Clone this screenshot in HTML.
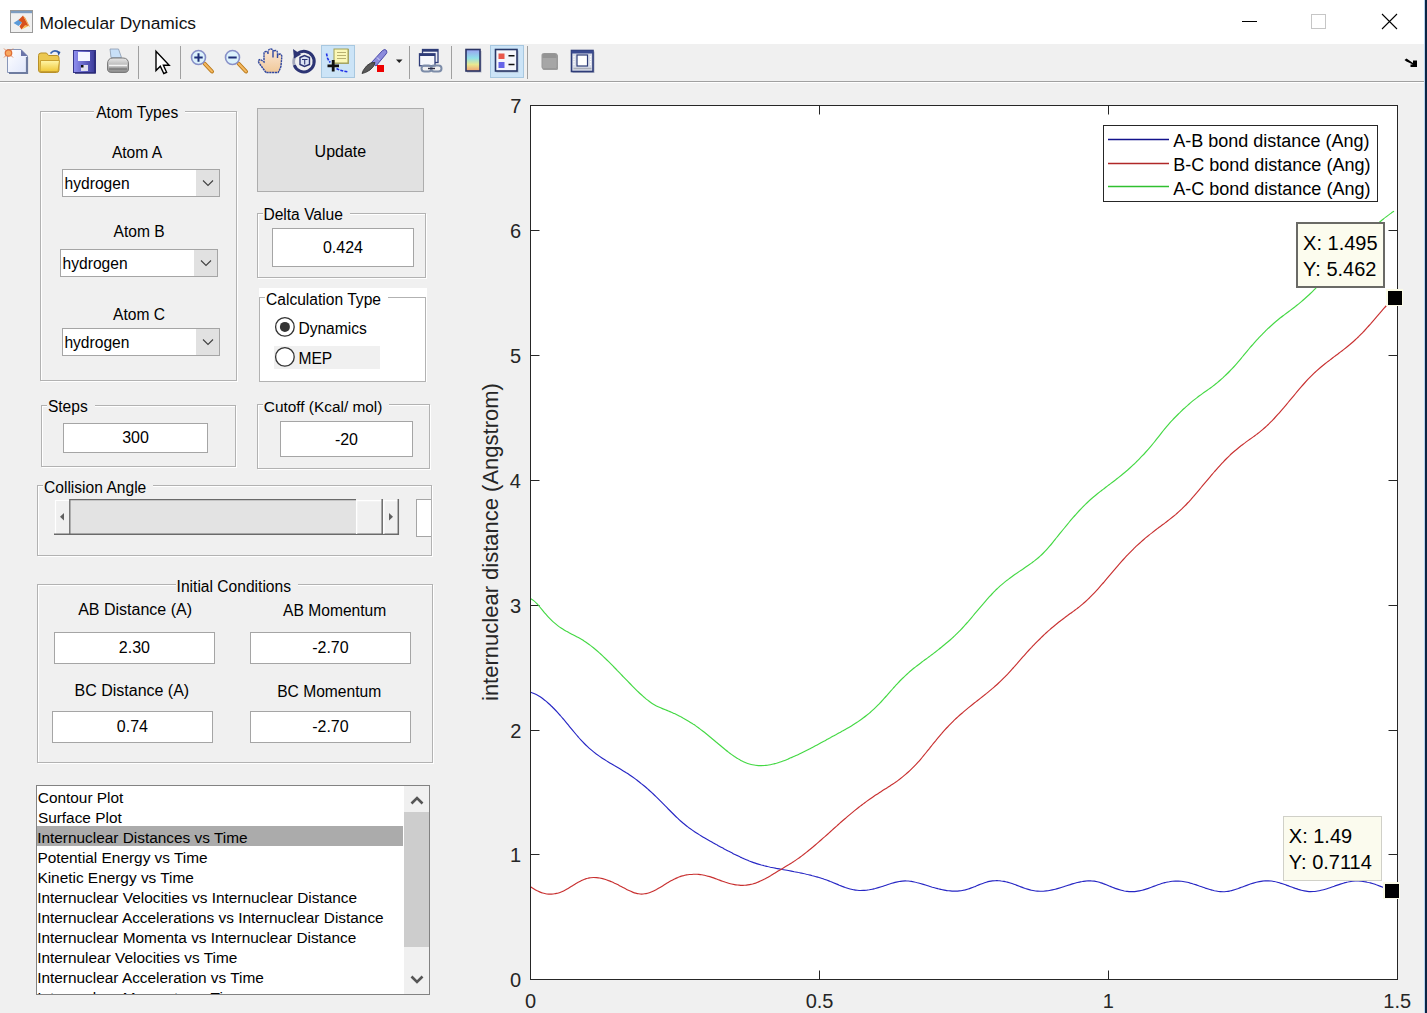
<!DOCTYPE html>
<html><head><meta charset="utf-8">
<style>
*{margin:0;padding:0;box-sizing:border-box}
html,body{width:1427px;height:1013px;overflow:hidden;background:#f0f0f0;font-family:"Liberation Sans",sans-serif;color:#000}
.a{position:absolute}
.t{position:absolute;white-space:nowrap;line-height:1;font-size:16px}
.pnl{position:absolute;border:1px solid #b2b2b2}
.pnlw{position:absolute;border:1px solid #fff}
.ptl{position:absolute;background:#f0f0f0;white-space:nowrap;line-height:1;font-size:16px;padding:0 2px}
.ed{position:absolute;background:#fff;border:1px solid #a5a5a5;font-size:16px;text-align:center;line-height:1}
.dd{position:absolute;background:#fff;border:1px solid #a5a5a5}
.dd .btn{position:absolute;top:0;right:0;bottom:0;width:23px;background:#e1e1e1}
.ax{font-size:20px;color:#262626}
</style></head><body>
<!-- title bar -->
<div class="a" style="left:0;top:0;width:1427px;height:44px;background:#fff"></div>
<svg class="a" style="left:10px;top:10px" width="24" height="24" viewBox="0 0 24 24">
<rect x="0.5" y="0.5" width="22" height="22" fill="#f0f0f0" stroke="#9a9a9a"/>
<rect x="1" y="1" width="21" height="2.2" fill="#7c9cc0"/>
<path d="M3.5 13L9 9.5L12 12.5L8.5 16Z" fill="#5a9ad8"/>
<path d="M8.5 10L13 5.5L16.5 12L18.5 16L15 15.5L11.5 19.5L9.5 16.5L12 12.5Z" fill="#d8501c"/>
<path d="M13 5.5L15.5 8L20 17L18.5 16L16.5 12Z" fill="#f0a040"/>
<path d="M11.5 19.5L15 15.5L18.5 16Z" fill="#f8b848"/>
</svg>
<div class="t" style="left:39.5px;top:14.8px;font-size:17.4px;color:#111">Molecular Dynamics</div>
<div class="a" style="left:1242px;top:21px;width:15px;height:1px;background:#000"></div>
<div class="a" style="left:1311px;top:14px;width:15px;height:15px;border:1px solid #c6c6c6"></div>
<svg class="a" style="left:1381px;top:13px" width="17" height="17"><path d="M1 1L16 16M16 1L1 16" stroke="#000" stroke-width="1.1"/></svg>
<div class="a" style="left:1425px;top:0;width:2px;height:1013px;background:#0b2444"></div>
<div class="a" style="left:1424px;top:0;width:1px;height:1013px;background:#b8d4ee"></div>
<!-- toolbar -->
<div class="a" style="left:0;top:81px;width:1424px;height:1px;background:#a0a0a0"></div>
<div class="a" style="left:0;top:82px;width:1424px;height:1px;background:#fff"></div>
<svg class="a" style="left:0;top:44px" width="620" height="37" viewBox="0 44 620 37">
<defs>
<linearGradient id="doc" x1="0" y1="0" x2="1" y2="1"><stop offset="0" stop-color="#ffffff"/><stop offset="1" stop-color="#dfe6fb"/></linearGradient>
<linearGradient id="fold" x1="0" y1="0" x2="0" y2="1"><stop offset="0" stop-color="#fff6a8"/><stop offset="1" stop-color="#f0c838"/></linearGradient>
<linearGradient id="flop" x1="0" y1="0" x2="1" y2="0"><stop offset="0" stop-color="#9090f0"/><stop offset="1" stop-color="#383898"/></linearGradient>
<linearGradient id="prn" x1="0" y1="0" x2="0" y2="1"><stop offset="0" stop-color="#e8e8e8"/><stop offset="1" stop-color="#8a8a8a"/></linearGradient>
<linearGradient id="skin" x1="0" y1="0" x2="0" y2="1"><stop offset="0" stop-color="#fbe8d8"/><stop offset="1" stop-color="#f0c898"/></linearGradient>
<linearGradient id="cb" x1="0" y1="0" x2="0" y2="1"><stop offset="0" stop-color="#9aa0f0"/><stop offset="0.4" stop-color="#90e0e8"/><stop offset="0.7" stop-color="#e8e890"/><stop offset="1" stop-color="#f0a070"/></linearGradient>
</defs>
<!-- new -->
<path d="M7.5 49.5H21L27.5 56V72.5H7.5Z" fill="url(#doc)" stroke="#8896b8" stroke-width="1"/>
<path d="M27 57V73H9" fill="none" stroke="#6e7ca0" stroke-width="2.2"/>
<path d="M21 49.5V56H27.5Z" fill="#6a74a8"/>
<circle cx="8.5" cy="53" r="3.2" fill="#f8a860" stroke="#e07038" stroke-width="1.3"/>
<path d="M4 48.5l2 2M13 48.5l-2 2M4 57.5l2-2M13 57.5l-2-2" stroke="#e08050" stroke-width="0.9"/>
<!-- open -->
<path d="M38.5 55.5Q38.5 53 41 53H46.5L48.5 55.5H57Q59 55.5 59 58V70Q59 72.5 56.5 72.5H41Q38.5 72.5 38.5 70Z" fill="#ecc850" stroke="#b89028" stroke-width="1"/>
<path d="M40.5 60.5H59.5L58 71.5H40Z" fill="url(#fold)" stroke="#c8a030" stroke-width="1"/>
<path d="M50.5 53.5Q54 49 58 52" stroke="#3a64b0" stroke-width="1.6" fill="none"/>
<path d="M57 50.5L60.5 52L58.5 56Z" fill="#2a54a0"/>
<!-- save -->
<rect x="73.5" y="50.5" width="22" height="22" fill="url(#flop)" stroke="#36368a" stroke-width="1"/>
<path d="M95 51.5V73H75" fill="none" stroke="#2c2c78" stroke-width="1.6"/>
<rect x="78" y="52" width="12" height="9" fill="#f4f6ff"/>
<rect x="81" y="65" width="7" height="6" fill="#e0e0ee"/>
<rect x="81" y="65" width="2.5" height="2.5" fill="#111"/>
<!-- print -->
<path d="M110 49H118.5L121.5 57.5H111Z" fill="#c8e0f8" stroke="#8a9ab0" stroke-width="0.8"/>
<path d="M107.5 64Q107.5 58 113 58H123Q128.5 58 128.5 64V69Q128.5 72.5 124 72.5H112Q107.5 72.5 107.5 69Z" fill="url(#prn)" stroke="#7a7a7a" stroke-width="1"/>
<path d="M109 65.5H127" stroke="#f4f4f4" stroke-width="1.5"/>
<path d="M109 69H127" stroke="#6a6a6a" stroke-width="1"/>
<rect x="138" y="46" width="1" height="33" fill="#a0a0a0"/>
<!-- pointer -->
<path d="M156 51.2V70.5L160.3 66.3L163.8 73.5L166.6 72.3L163.4 65.3H169.2Z" fill="#fff" stroke="#000" stroke-width="1.4" stroke-linejoin="miter"/>
<rect x="180" y="46" width="1" height="33" fill="#a0a0a0"/>
<!-- zoom in -->
<path d="M204.5 63.5l7.5 8" stroke="#b87818" stroke-width="4" stroke-linecap="round"/>
<path d="M204.5 63.5l7.5 8" stroke="#f4b860" stroke-width="2" stroke-linecap="round"/>
<circle cx="198.5" cy="57.5" r="7" fill="#dcf2fc" stroke="#8890c8" stroke-width="1.6"/>
<path d="M194.3 57.5h8.4M198.5 53.3v8.4" stroke="#1e2e78" stroke-width="2"/>
<!-- zoom out -->
<path d="M238.5 63.5l7.5 8" stroke="#b87818" stroke-width="4" stroke-linecap="round"/>
<path d="M238.5 63.5l7.5 8" stroke="#f4b860" stroke-width="2" stroke-linecap="round"/>
<circle cx="232.5" cy="57.5" r="7" fill="#dcf2fc" stroke="#8890c8" stroke-width="1.6"/>
<path d="M228.3 57.5h8.4" stroke="#1e2e78" stroke-width="2"/>
<!-- pan hand -->
<path d="M266 72.5L259 63Q257.5 60 260.5 59.5L264 62V54Q264 51.5 266 51.5Q268 51.5 268 54V51.5Q268.5 49 270.8 49Q273 49 273 51.5V57.5V52Q273.5 50.5 275.5 50.5Q277.5 50.5 277.5 53V58V56Q278 54 280 54Q282 54.5 281.8 57L281 66Q280 70 278 72.5Z" fill="url(#skin)" stroke="#3048a0" stroke-width="1.4" stroke-dasharray="2.2 0.6"/>
<!-- rotate -->
<path d="M297.5 53.5A10.3 10.3 0 1 1 294.2 65" fill="none" stroke="#2c3474" stroke-width="3"/>
<path d="M294.2 65A10.3 10.3 0 0 1 295.5 56" fill="none" stroke="#a4a8bc" stroke-width="2.8"/>
<path d="M293 49L301 54.5L294 58.5Z" fill="#2c3474"/>
<path d="M300 57.5L304.5 55.5L309.5 57.5V64.5L304.5 66.5L300 64.5Z" fill="#dce4f4" stroke="#2c3474" stroke-width="1.4"/>
<path d="M302 59.5H307.5M304.7 59.5V64.5" stroke="#2c3474" stroke-width="1.1"/>
<!-- datacursor selected -->
<rect x="321.5" y="45.5" width="33" height="32" fill="#cce4f7" stroke="#a8c8e0"/>
<rect x="334" y="49" width="15" height="15" fill="#a8a870"/>
<rect x="334" y="49" width="14" height="14" fill="#fbf8b8" stroke="#a0a058" stroke-width="1"/>
<path d="M337 52.5h9M337 55.5h9M337 58.5h9" stroke="#b8b070" stroke-width="1"/>
<path d="M326.5 53.5l1 4.5l1.2 2.5l1.6 2" stroke="#2030e8" stroke-width="1.6" stroke-dasharray="3 1.2" fill="none"/>
<path d="M336.5 68.5l3 1.5l4 1l4 .8" stroke="#2030e8" stroke-width="1.6" stroke-dasharray="3 1.2" fill="none"/>
<path d="M327.5 65.8h11.5M333.2 60v11.5" stroke="#101010" stroke-width="2.8"/>
<!-- brush -->
<path d="M371.5 62.5L382.5 50.5Q385 48.5 386.5 50.5Q387.5 52.5 386 54L376 66Z" fill="#8c8cdc" stroke="#4a4aa8" stroke-width="1"/>
<path d="M377 57.5l2.5 2.5" stroke="#f0f0ff" stroke-width="0.8"/>
<path d="M375 62.5Q371 61.5 366.5 66Q362.5 70.5 362 73.5Q365.5 73 370 70Q374.5 66.5 375 62.5Z" fill="#585858" stroke="#303030" stroke-width="0.8"/>
<rect x="377" y="65" width="7" height="7" fill="#ee0000"/>
<path d="M396 59.5h6.5l-3.25 3.5z" fill="#222"/>
<rect x="409" y="46" width="1" height="33" fill="#a0a0a0"/>
<!-- link -->
<rect x="422.5" y="49.5" width="15.5" height="13" fill="#eef0f8" stroke="#2e3c78" stroke-width="1.3"/>
<rect x="422.5" y="49.5" width="15.5" height="2.2" fill="#2e3c78"/>
<rect x="419.5" y="53.8" width="15.5" height="12" fill="#f6f8fc" stroke="#2e3c78" stroke-width="1.3"/>
<rect x="419.5" y="53.8" width="15.5" height="2.2" fill="#2e3c78"/>
<rect x="421.5" y="65.5" width="10" height="6" rx="3" fill="none" stroke="#7c8ca8" stroke-width="2"/>
<rect x="431" y="65.5" width="10.5" height="6" rx="3" fill="none" stroke="#7c8ca8" stroke-width="2"/>
<path d="M428 68.5h7" stroke="#2a2a40" stroke-width="1.4"/>
<rect x="451" y="46" width="1" height="33" fill="#a0a0a0"/>
<!-- colorbar -->
<rect x="467" y="51" width="14.5" height="21.5" fill="#8890a8" opacity="0.6"/>
<rect x="466" y="49.5" width="14" height="21.5" fill="url(#cb)" stroke="#2a3464" stroke-width="1.6"/>
<!-- legend selected -->
<rect x="490.5" y="45.5" width="33" height="32" fill="#cce4f7" stroke="#a8c8e0"/>
<rect x="496.5" y="50.5" width="22" height="22" fill="#8890a8" opacity="0.6"/>
<rect x="495.5" y="49.5" width="21.5" height="21.5" fill="#f4f6fb" stroke="#283868" stroke-width="1.6"/>
<rect x="498.5" y="53.5" width="6" height="5.5" fill="#e8584c"/>
<rect x="498.5" y="62" width="6" height="6" fill="#6464e8"/>
<path d="M508.5 55.8h6M508.5 64.5h6" stroke="#111" stroke-width="1.6"/>
<rect x="527" y="46" width="1" height="33" fill="#a0a0a0"/>
<!-- gray square -->
<rect x="542.5" y="54.5" width="15.5" height="15.5" rx="1.5" fill="#9c9c9c"/>
<rect x="542" y="53.5" width="15" height="15" rx="1.5" fill="#a6a6a6" stroke="#989898" stroke-width="1"/>
<rect x="542.5" y="54" width="14" height="4" fill="#949494"/>
<!-- window -->
<rect x="572.5" y="51.5" width="22" height="21.5" fill="#8890a8" opacity="0.6"/>
<rect x="571.5" y="50.5" width="21.5" height="21" fill="#d8dce8" stroke="#2e3c78" stroke-width="1.6"/>
<rect x="571.5" y="50.5" width="21.5" height="3" fill="#3a4a90"/>
<rect x="577" y="55" width="10.5" height="11" fill="#fff" stroke="#2e3c78" stroke-width="1.2"/>
<path d="M574 56v9M590.5 56v9" stroke="#ffffff" stroke-width="1.2" stroke-dasharray="1.5 1"/>
<path d="M573.5 68.5h18" stroke="#a8acb8" stroke-width="1.5"/>
</svg>
<svg class="a" style="left:1403px;top:56px" width="17" height="13" viewBox="0 0 17 13"><path d="M1.5 4L3.5 2.5L10 7V4.5H14V11H7.5V8.5H10L3.5 5.5Z" fill="#000"/></svg>
<div class="pnlw" style="left:41px;top:112px;width:197px;height:270px"></div><div class="pnl" style="left:40px;top:111px;width:197px;height:270px"></div>
<div class="a" style="left:94.3px;top:103.8px;width:91.0px;height:18.0px;background:#f0f0f0"></div><div class="t" style="left:96.2px;top:104.6px;font-size:15.6px">Atom Types</div>
<div class="t" style="left:111.9px;top:144.7px;font-size:15.6px;">Atom A</div>
<div class="dd" style="left:62px;top:169px;width:158px;height:28px"><div class="btn"></div></div><svg class="a" style="left:201.5px;top:179.0px" width="12" height="8"><path d="M1 1.5L6 6.5L11 1.5" fill="none" stroke="#404040" stroke-width="1.1"/></svg><div class="t" style="left:64.6px;top:176.3px;font-size:15.6px;">hydrogen</div>
<div class="t" style="left:113.5px;top:224.0px;font-size:15.6px;">Atom B</div>
<div class="dd" style="left:60px;top:249px;width:158px;height:28px"><div class="btn"></div></div><svg class="a" style="left:199.5px;top:259.0px" width="12" height="8"><path d="M1 1.5L6 6.5L11 1.5" fill="none" stroke="#404040" stroke-width="1.1"/></svg><div class="t" style="left:62.6px;top:255.6px;font-size:15.6px;">hydrogen</div>
<div class="t" style="left:113.0px;top:307.2px;font-size:15.6px;">Atom C</div>
<div class="dd" style="left:62px;top:328px;width:158px;height:28px"><div class="btn"></div></div><svg class="a" style="left:201.5px;top:338.0px" width="12" height="8"><path d="M1 1.5L6 6.5L11 1.5" fill="none" stroke="#404040" stroke-width="1.1"/></svg><div class="t" style="left:64.4px;top:334.7px;font-size:15.6px;">hydrogen</div>
<div class="a" style="left:257px;top:108px;width:167px;height:84px;background:#e1e1e1;border:1px solid #adadad"></div>
<div class="t" style="left:314.6px;top:143.5px;font-size:16px;">Update</div>
<div class="pnlw" style="left:258px;top:214px;width:169px;height:65px"></div><div class="pnl" style="left:257px;top:213px;width:169px;height:65px"></div>
<div class="a" style="left:262.6px;top:205.7px;width:87.0px;height:18.0px;background:#f0f0f0"></div><div class="t" style="left:263.4px;top:206.5px;font-size:15.6px">Delta Value</div>
<div class="ed" style="left:272px;top:228px;width:142px;height:39px"></div><div class="t" style="left:322.9px;top:240.2px;font-size:16px;">0.424</div>
<div class="a" style="left:259px;top:288px;width:168px;height:94px;background:#fff"></div>
<div class="a" style="left:259px;top:297px;width:167px;height:85px;border:1px solid #b2b2b2"></div>
<div class="a" style="left:264.8px;top:290.8px;width:123.0px;height:18.0px;background:#fff"></div><div class="t" style="left:266.0px;top:291.6px;font-size:15.6px">Calculation Type</div>
<div class="a" style="left:274px;top:346px;width:106px;height:23px;background:#f0f0f0"></div>
<svg class="a" style="left:274px;top:316px" width="22" height="52"><circle cx="10.9" cy="10.9" r="9.3" fill="#fff" stroke="#333" stroke-width="1.3"/><circle cx="10.9" cy="10.9" r="5" fill="#333"/><circle cx="10.9" cy="40.9" r="9.3" fill="#fff" stroke="#333" stroke-width="1.3"/></svg>
<div class="t" style="left:298.4px;top:320.5px;font-size:15.6px;">Dynamics</div>
<div class="t" style="left:298.4px;top:350.6px;font-size:15.6px;">MEP</div>
<div class="pnlw" style="left:42px;top:406px;width:195px;height:62px"></div><div class="pnl" style="left:41px;top:405px;width:195px;height:62px"></div>
<div class="a" style="left:46.6px;top:398.6px;width:48.1px;height:18.0px;background:#f0f0f0"></div><div class="t" style="left:47.9px;top:399.4px;font-size:15.6px">Steps</div>
<div class="ed" style="left:63px;top:423px;width:145px;height:30px"></div><div class="t" style="left:122.2px;top:430.2px;font-size:16px;">300</div>
<div class="pnlw" style="left:258px;top:405px;width:173px;height:65px"></div><div class="pnl" style="left:257px;top:404px;width:173px;height:65px"></div>
<div class="a" style="left:262.6px;top:397.9px;width:126.5px;height:18.0px;background:#f0f0f0"></div><div class="t" style="left:263.8px;top:398.9px;font-size:15.4px">Cutoff (Kcal/ mol)</div>
<div class="ed" style="left:280px;top:421px;width:133px;height:36px"></div><div class="t" style="left:334.9px;top:431.6px;font-size:16px;">-20</div>
<div class="pnlw" style="left:38px;top:486px;width:395px;height:71px"></div><div class="pnl" style="left:37px;top:485px;width:395px;height:71px"></div>
<div class="a" style="left:42.8px;top:478.9px;width:110.4px;height:18.0px;background:#f0f0f0"></div><div class="t" style="left:44.0px;top:479.7px;font-size:15.6px">Collision Angle</div>
<div class="a" style="left:416px;top:499px;width:15px;height:38px;background:#fff;border:1px solid #a5a5a5;border-right:none"></div>
<svg class="a" style="left:50px;top:495px" width="352" height="45" viewBox="50 495 352 45">
<rect x="54" y="500" width="16" height="35" fill="#f0f0f0"/>
<path d="M55.5 534V500.5H69" stroke="#fff" stroke-width="1.2" fill="none"/>
<rect x="69" y="499" width="287" height="36" fill="#e3e3e3"/>
<path d="M69.8 535V499.6H356" stroke="#6a6a6a" stroke-width="1.3" fill="none"/>
<path d="M54 534.3H399" stroke="#6a6a6a" stroke-width="1.5"/>
<path d="M356.6 534V500.6H382" stroke="#fff" stroke-width="1.3" fill="none"/>
<path d="M382.2 499V535" stroke="#6a6a6a" stroke-width="1.5"/>
<path d="M383.8 534V500.6H398" stroke="#fff" stroke-width="1.3" fill="none"/>
<path d="M398.3 499V535" stroke="#6a6a6a" stroke-width="1.5"/>
<path d="M64 513V520.5L60 516.7Z" fill="#606060"/>
<path d="M389 513V520.5L393 516.7Z" fill="#606060"/>
</svg>
<div class="pnlw" style="left:38px;top:585px;width:396px;height:179px"></div><div class="pnl" style="left:37px;top:584px;width:396px;height:179px"></div>
<div class="a" style="left:176.0px;top:577.7px;width:122.0px;height:18.0px;background:#f0f0f0"></div><div class="t" style="left:176.6px;top:578.5px;font-size:15.6px">Initial Conditions</div>
<div class="t" style="left:78.2px;top:602.3px;font-size:16px;">AB Distance (A)</div>
<div class="t" style="left:283.1px;top:603.0px;font-size:15.6px;">AB Momentum</div>
<div class="t" style="left:74.5px;top:683.4px;font-size:16px;">BC Distance (A)</div>
<div class="t" style="left:277.2px;top:683.9px;font-size:15.6px;">BC Momentum</div>
<div class="ed" style="left:54px;top:632px;width:161px;height:32px"></div><div class="t" style="left:118.8px;top:640.4px;font-size:16px;">2.30</div>
<div class="ed" style="left:250px;top:632px;width:161px;height:32px"></div><div class="t" style="left:312.2px;top:639.9px;font-size:16px;">-2.70</div>
<div class="ed" style="left:52px;top:711px;width:161px;height:32px"></div><div class="t" style="left:116.8px;top:719.4px;font-size:16px;">0.74</div>
<div class="ed" style="left:250px;top:711px;width:161px;height:32px"></div><div class="t" style="left:312.2px;top:719.1px;font-size:16px;">-2.70</div>
<div class="a" style="left:36px;top:785px;width:394px;height:210px;background:#fff;border:1px solid #828282;overflow:hidden">
<div class="a" style="left:0;top:40px;width:366px;height:20px;background:#ababab"></div>
<div class="t" style="left:0.8px;top:3.6px;font-size:15.4px">Contour Plot</div>
<div class="t" style="left:0.9px;top:23.6px;font-size:15.4px">Surface Plot</div>
<div class="t" style="left:0.2px;top:43.6px;font-size:15.4px">Internuclear Distances vs Time</div>
<div class="t" style="left:0.4px;top:63.6px;font-size:15.4px">Potential Energy vs Time</div>
<div class="t" style="left:0.4px;top:83.6px;font-size:15.4px">Kinetic Energy vs Time</div>
<div class="t" style="left:0.2px;top:103.6px;font-size:15.4px">Internuclear Velocities vs Internuclear Distance</div>
<div class="t" style="left:0.2px;top:123.6px;font-size:15.4px">Internuclear Accelerations vs Internuclear Distance</div>
<div class="t" style="left:0.2px;top:143.6px;font-size:15.4px">Internuclear Momenta vs Internuclear Distance</div>
<div class="t" style="left:0.2px;top:163.6px;font-size:15.4px">Internulear Velocities vs Time</div>
<div class="t" style="left:0.2px;top:183.6px;font-size:15.4px">Internuclear Acceleration vs Time</div>
<div class="t" style="left:0.2px;top:203.6px;font-size:15.4px">Internuclear Momenta vs Time</div>
<div class="a" style="left:367px;top:0;width:25px;height:208px;background:#f0f0f0"></div>
<div class="a" style="left:367px;top:26px;width:25px;height:135px;background:#cdcdcd"></div>
<svg class="a" style="left:372.5px;top:7.5px" width="14" height="12"><path d="M1.5 9.5L7 4L12.5 9.5" fill="none" stroke="#555" stroke-width="2.6"/></svg>
<svg class="a" style="left:373px;top:188px" width="14" height="12"><path d="M1.5 2.5L7 8L12.5 2.5" fill="none" stroke="#555" stroke-width="2.6"/></svg>
</div>
<div class="a" style="left:530px;top:105px;width:868px;height:875px;background:#fff"></div>
<svg class="a" style="left:0;top:0" width="1427" height="1013" viewBox="0 0 1427 1013">
<path d="M530.5 979.5v-9M530.5 105.5v9M819.5 979.5v-9M819.5 105.5v9M1108.5 979.5v-9M1108.5 105.5v9M1397.5 979.5v-9M1397.5 105.5v9M530.5 979.5h9M1397.5 979.5h-9M530.5 854.5h9M1397.5 854.5h-9M530.5 730.5h9M1397.5 730.5h-9M530.5 605.5h9M1397.5 605.5h-9M530.5 480.5h9M1397.5 480.5h-9M530.5 355.5h9M1397.5 355.5h-9M530.5 230.5h9M1397.5 230.5h-9M530.5 105.5h9M1397.5 105.5h-9" stroke="#262626" stroke-width="1" fill="none"/>
<path d="M530.3 692.1C530.8 692.3 532.3 692.8 533.3 693.2C534.3 693.6 535.3 694.1 536.3 694.6C537.3 695.1 538.3 695.7 539.3 696.3C540.3 696.9 541.3 697.6 542.3 698.3C543.3 699.1 544.3 699.8 545.3 700.6C546.3 701.4 547.3 702.3 548.3 703.2C549.3 704.1 550.3 705.0 551.3 706.0C552.3 706.9 553.3 708.0 554.3 709.0C555.3 710.0 556.3 711.1 557.3 712.2C558.3 713.3 559.3 714.4 560.3 715.5C561.3 716.7 562.3 717.9 563.3 719.0C564.3 720.2 565.3 721.4 566.3 722.6C567.3 723.8 568.3 725.1 569.3 726.3C570.3 727.5 571.3 728.7 572.3 729.9C573.3 731.1 574.3 732.3 575.3 733.5C576.3 734.7 577.3 735.9 578.3 737.0C579.3 738.2 580.3 739.3 581.3 740.4C582.3 741.5 583.3 742.5 584.3 743.5C585.3 744.5 586.3 745.5 587.3 746.4C588.3 747.4 589.3 748.3 590.3 749.1C591.3 750.0 592.3 750.8 593.3 751.6C594.3 752.4 595.3 753.2 596.3 754.0C597.3 754.7 598.3 755.4 599.3 756.1C600.3 756.8 601.3 757.5 602.3 758.2C603.3 758.9 604.3 759.5 605.3 760.1C606.3 760.8 607.3 761.4 608.3 762.0C609.3 762.6 610.3 763.2 611.3 763.8C612.3 764.4 613.3 765.0 614.3 765.6C615.3 766.1 616.3 766.7 617.3 767.3C618.3 767.9 619.3 768.5 620.3 769.1C621.3 769.7 622.3 770.3 623.3 770.9C624.3 771.5 625.3 772.1 626.3 772.8C627.3 773.4 628.3 774.0 629.3 774.7C630.3 775.4 631.3 776.1 632.3 776.8C633.3 777.5 634.3 778.2 635.3 778.9C636.3 779.7 637.3 780.4 638.3 781.2C639.3 782.0 640.3 782.7 641.3 783.6C642.3 784.4 643.3 785.2 644.3 786.0C645.3 786.9 646.3 787.7 647.3 788.6C648.3 789.5 649.3 790.3 650.3 791.3C651.3 792.2 652.3 793.1 653.3 794.0C654.3 794.9 655.3 795.9 656.3 796.9C657.3 797.8 658.3 798.8 659.3 799.8C660.3 800.8 661.3 801.8 662.3 802.8C663.3 803.8 664.3 804.8 665.3 805.9C666.3 806.9 667.3 807.9 668.3 809.0C669.3 810.0 670.3 811.0 671.3 812.0C672.3 813.0 673.3 814.0 674.3 815.0C675.3 816.0 676.3 817.0 677.3 817.9C678.3 818.8 679.3 819.8 680.3 820.7C681.3 821.6 682.3 822.4 683.3 823.3C684.3 824.1 685.3 824.9 686.3 825.7C687.3 826.5 688.3 827.2 689.3 828.0C690.3 828.7 691.3 829.4 692.3 830.1C693.3 830.8 694.3 831.5 695.3 832.2C696.3 832.9 697.3 833.5 698.3 834.1C699.3 834.8 700.3 835.4 701.3 836.0C702.3 836.6 703.3 837.2 704.3 837.8C705.3 838.4 706.3 839.0 707.3 839.5C708.3 840.1 709.3 840.7 710.3 841.2C711.3 841.8 712.3 842.3 713.3 842.9C714.3 843.5 715.3 844.0 716.3 844.6C717.3 845.1 718.3 845.7 719.3 846.2C720.3 846.8 721.3 847.3 722.3 847.8C723.3 848.4 724.3 848.9 725.3 849.5C726.3 850.0 727.3 850.5 728.3 851.1C729.3 851.6 730.3 852.1 731.3 852.6C732.3 853.1 733.3 853.7 734.3 854.2C735.3 854.7 736.3 855.2 737.3 855.6C738.3 856.1 739.3 856.6 740.3 857.1C741.3 857.5 742.3 858.0 743.3 858.4C744.3 858.9 745.3 859.3 746.3 859.7C747.3 860.1 748.3 860.6 749.3 861.0C750.3 861.3 751.3 861.7 752.3 862.1C753.3 862.5 754.3 862.8 755.3 863.1C756.3 863.5 757.3 863.8 758.3 864.1C759.3 864.4 760.3 864.7 761.3 865.0C762.3 865.2 763.3 865.5 764.3 865.8C765.3 866.0 766.3 866.3 767.3 866.5C768.3 866.7 769.3 866.9 770.3 867.2C771.3 867.4 772.3 867.6 773.3 867.8C774.3 868.0 775.3 868.2 776.3 868.4C777.3 868.5 778.3 868.7 779.3 868.9C780.3 869.1 781.3 869.3 782.3 869.5C783.3 869.6 784.3 869.8 785.3 870.0C786.3 870.2 787.3 870.4 788.3 870.5C789.3 870.7 790.3 870.9 791.3 871.1C792.3 871.3 793.3 871.5 794.3 871.7C795.3 871.8 796.3 872.0 797.3 872.2C798.3 872.4 799.3 872.6 800.3 872.9C801.3 873.1 802.3 873.3 803.3 873.5C804.3 873.7 805.3 873.9 806.3 874.2C807.3 874.4 808.3 874.6 809.3 874.9C810.3 875.1 811.3 875.4 812.3 875.7C813.3 875.9 814.3 876.2 815.3 876.5C816.3 876.8 817.3 877.0 818.3 877.3C819.3 877.6 820.3 878.0 821.3 878.3C822.3 878.6 823.3 878.9 824.3 879.3C825.3 879.6 826.3 880.0 827.3 880.3C828.3 880.7 829.3 881.1 830.3 881.5C831.3 881.8 832.3 882.3 833.3 882.7C834.3 883.1 835.3 883.5 836.3 883.9C837.3 884.3 838.3 884.7 839.3 885.2C840.3 885.6 841.3 886.0 842.3 886.4C843.3 886.7 844.3 887.1 845.3 887.5C846.3 887.8 847.3 888.2 848.3 888.5C849.3 888.8 850.3 889.1 851.3 889.3C852.3 889.5 853.3 889.8 854.3 889.9C855.3 890.1 856.3 890.2 857.3 890.3C858.3 890.4 859.3 890.5 860.3 890.5C861.3 890.5 862.3 890.5 863.3 890.4C864.3 890.4 865.3 890.3 866.3 890.2C867.3 890.1 868.3 889.9 869.3 889.8C870.3 889.6 871.3 889.4 872.3 889.2C873.3 889.0 874.3 888.7 875.3 888.5C876.3 888.2 877.3 887.9 878.3 887.6C879.3 887.3 880.3 887.0 881.3 886.7C882.3 886.4 883.3 886.1 884.3 885.7C885.3 885.4 886.3 885.1 887.3 884.7C888.3 884.4 889.3 884.1 890.3 883.8C891.3 883.4 892.3 883.1 893.3 882.9C894.3 882.6 895.3 882.3 896.3 882.1C897.3 881.9 898.3 881.7 899.3 881.5C900.3 881.3 901.3 881.2 902.3 881.1C903.3 881.0 904.3 880.9 905.3 880.9C906.3 880.9 907.3 881.0 908.3 881.0C909.3 881.1 910.3 881.2 911.3 881.4C912.3 881.6 913.3 881.8 914.3 882.0C915.3 882.2 916.3 882.4 917.3 882.7C918.3 882.9 919.3 883.2 920.3 883.5C921.3 883.8 922.3 884.1 923.3 884.4C924.3 884.7 925.3 885.0 926.3 885.3C927.3 885.6 928.3 886.0 929.3 886.3C930.3 886.6 931.3 886.9 932.3 887.2C933.3 887.4 934.3 887.7 935.3 888.0C936.3 888.3 937.3 888.5 938.3 888.8C939.3 889.0 940.3 889.3 941.3 889.5C942.3 889.7 943.3 889.9 944.3 890.1C945.3 890.3 946.3 890.4 947.3 890.6C948.3 890.7 949.3 890.8 950.3 890.9C951.3 891.0 952.3 891.1 953.3 891.1C954.3 891.1 955.3 891.2 956.3 891.1C957.3 891.1 958.3 891.0 959.3 890.9C960.3 890.8 961.3 890.7 962.3 890.5C963.3 890.3 964.3 890.1 965.3 889.9C966.3 889.6 967.3 889.3 968.3 889.0C969.3 888.7 970.3 888.3 971.3 887.9C972.3 887.6 973.3 887.2 974.3 886.8C975.3 886.4 976.3 885.9 977.3 885.5C978.3 885.1 979.3 884.7 980.3 884.3C981.3 883.9 982.3 883.5 983.3 883.2C984.3 882.8 985.3 882.5 986.3 882.2C987.3 881.9 988.3 881.6 989.3 881.4C990.3 881.2 991.3 881.0 992.3 880.9C993.3 880.8 994.3 880.7 995.3 880.7C996.3 880.6 997.3 880.7 998.3 880.7C999.3 880.8 1000.3 880.8 1001.3 881.0C1002.3 881.1 1003.3 881.3 1004.3 881.4C1005.3 881.6 1006.3 881.9 1007.3 882.1C1008.3 882.4 1009.3 882.7 1010.3 883.0C1011.3 883.3 1012.3 883.6 1013.3 884.0C1014.3 884.4 1015.3 884.7 1016.3 885.1C1017.3 885.5 1018.3 885.9 1019.3 886.3C1020.3 886.7 1021.3 887.0 1022.3 887.4C1023.3 887.8 1024.3 888.1 1025.3 888.5C1026.3 888.8 1027.3 889.1 1028.3 889.4C1029.3 889.7 1030.3 890.0 1031.3 890.2C1032.3 890.4 1033.3 890.6 1034.3 890.7C1035.3 890.9 1036.3 891.0 1037.3 891.1C1038.3 891.2 1039.3 891.2 1040.3 891.2C1041.3 891.2 1042.3 891.2 1043.3 891.2C1044.3 891.1 1045.3 891.0 1046.3 890.9C1047.3 890.8 1048.3 890.7 1049.3 890.5C1050.3 890.3 1051.3 890.1 1052.3 889.9C1053.3 889.7 1054.3 889.5 1055.3 889.2C1056.3 889.0 1057.3 888.7 1058.3 888.4C1059.3 888.1 1060.3 887.8 1061.3 887.5C1062.3 887.2 1063.3 886.8 1064.3 886.5C1065.3 886.2 1066.3 885.8 1067.3 885.5C1068.3 885.2 1069.3 884.9 1070.3 884.6C1071.3 884.2 1072.3 883.9 1073.3 883.6C1074.3 883.3 1075.3 883.1 1076.3 882.8C1077.3 882.5 1078.3 882.3 1079.3 882.1C1080.3 881.9 1081.3 881.6 1082.3 881.5C1083.3 881.3 1084.3 881.2 1085.3 881.1C1086.3 881.0 1087.3 880.9 1088.3 880.8C1089.3 880.8 1090.3 880.8 1091.3 880.9C1092.3 880.9 1093.3 881.0 1094.3 881.1C1095.3 881.3 1096.3 881.5 1097.3 881.7C1098.3 882.0 1099.3 882.2 1100.3 882.6C1101.3 882.9 1102.3 883.2 1103.3 883.6C1104.3 883.9 1105.3 884.3 1106.3 884.7C1107.3 885.1 1108.3 885.5 1109.3 886.0C1110.3 886.4 1111.3 886.8 1112.3 887.2C1113.3 887.6 1114.3 888.0 1115.3 888.4C1116.3 888.7 1117.3 889.1 1118.3 889.4C1119.3 889.7 1120.3 890.0 1121.3 890.3C1122.3 890.6 1123.3 890.8 1124.3 891.0C1125.3 891.1 1126.3 891.3 1127.3 891.4C1128.3 891.5 1129.3 891.6 1130.3 891.6C1131.3 891.7 1132.3 891.7 1133.3 891.6C1134.3 891.6 1135.3 891.5 1136.3 891.4C1137.3 891.3 1138.3 891.1 1139.3 890.9C1140.3 890.7 1141.3 890.5 1142.3 890.2C1143.3 890.0 1144.3 889.7 1145.3 889.4C1146.3 889.1 1147.3 888.7 1148.3 888.4C1149.3 888.0 1150.3 887.6 1151.3 887.3C1152.3 886.9 1153.3 886.5 1154.3 886.1C1155.3 885.8 1156.3 885.4 1157.3 885.0C1158.3 884.7 1159.3 884.3 1160.3 884.0C1161.3 883.6 1162.3 883.3 1163.3 883.0C1164.3 882.7 1165.3 882.5 1166.3 882.2C1167.3 882.0 1168.3 881.8 1169.3 881.7C1170.3 881.5 1171.3 881.4 1172.3 881.3C1173.3 881.2 1174.3 881.1 1175.3 881.1C1176.3 881.1 1177.3 881.1 1178.3 881.1C1179.3 881.1 1180.3 881.2 1181.3 881.3C1182.3 881.4 1183.3 881.5 1184.3 881.7C1185.3 881.9 1186.3 882.1 1187.3 882.3C1188.3 882.5 1189.3 882.8 1190.3 883.1C1191.3 883.3 1192.3 883.6 1193.3 884.0C1194.3 884.3 1195.3 884.6 1196.3 884.9C1197.3 885.3 1198.3 885.6 1199.3 886.0C1200.3 886.3 1201.3 886.7 1202.3 887.0C1203.3 887.4 1204.3 887.7 1205.3 888.1C1206.3 888.4 1207.3 888.7 1208.3 889.0C1209.3 889.4 1210.3 889.7 1211.3 889.9C1212.3 890.2 1213.3 890.4 1214.3 890.7C1215.3 890.9 1216.3 891.1 1217.3 891.2C1218.3 891.4 1219.3 891.5 1220.3 891.6C1221.3 891.7 1222.3 891.7 1223.3 891.7C1224.3 891.7 1225.3 891.6 1226.3 891.5C1227.3 891.4 1228.3 891.3 1229.3 891.1C1230.3 890.9 1231.3 890.6 1232.3 890.4C1233.3 890.1 1234.3 889.8 1235.3 889.5C1236.3 889.2 1237.3 888.8 1238.3 888.5C1239.3 888.1 1240.3 887.7 1241.3 887.3C1242.3 887.0 1243.3 886.6 1244.3 886.2C1245.3 885.8 1246.3 885.4 1247.3 885.1C1248.3 884.7 1249.3 884.3 1250.3 884.0C1251.3 883.7 1252.3 883.4 1253.3 883.1C1254.3 882.8 1255.3 882.5 1256.3 882.2C1257.3 882.0 1258.3 881.8 1259.3 881.6C1260.3 881.4 1261.3 881.2 1262.3 881.1C1263.3 881.0 1264.3 880.9 1265.3 880.8C1266.3 880.8 1267.3 880.8 1268.3 880.8C1269.3 880.8 1270.3 880.9 1271.3 881.0C1272.3 881.2 1273.3 881.3 1274.3 881.5C1275.3 881.7 1276.3 881.9 1277.3 882.2C1278.3 882.5 1279.3 882.7 1280.3 883.1C1281.3 883.4 1282.3 883.7 1283.3 884.0C1284.3 884.4 1285.3 884.7 1286.3 885.1C1287.3 885.5 1288.3 885.8 1289.3 886.2C1290.3 886.6 1291.3 886.9 1292.3 887.3C1293.3 887.7 1294.3 888.0 1295.3 888.4C1296.3 888.7 1297.3 889.0 1298.3 889.4C1299.3 889.7 1300.3 890.0 1301.3 890.2C1302.3 890.5 1303.3 890.7 1304.3 890.9C1305.3 891.1 1306.3 891.3 1307.3 891.4C1308.3 891.5 1309.3 891.6 1310.3 891.6C1311.3 891.6 1312.3 891.6 1313.3 891.5C1314.3 891.5 1315.3 891.4 1316.3 891.2C1317.3 891.1 1318.3 890.9 1319.3 890.7C1320.3 890.5 1321.3 890.3 1322.3 890.0C1323.3 889.8 1324.3 889.5 1325.3 889.2C1326.3 888.9 1327.3 888.6 1328.3 888.2C1329.3 887.9 1330.3 887.6 1331.3 887.2C1332.3 886.9 1333.3 886.5 1334.3 886.2C1335.3 885.8 1336.3 885.5 1337.3 885.1C1338.3 884.8 1339.3 884.5 1340.3 884.1C1341.3 883.8 1342.3 883.5 1343.3 883.2C1344.3 882.9 1345.3 882.6 1346.3 882.4C1347.3 882.1 1348.3 881.9 1349.3 881.7C1350.3 881.5 1351.3 881.4 1352.3 881.2C1353.3 881.1 1354.3 881.0 1355.3 881.0C1356.3 880.9 1357.3 880.9 1358.3 881.0C1359.3 881.0 1360.3 881.1 1361.3 881.2C1362.3 881.3 1363.3 881.4 1364.3 881.6C1365.3 881.7 1366.3 881.9 1367.3 882.2C1368.3 882.4 1369.3 882.6 1370.3 882.9C1371.3 883.2 1372.3 883.5 1373.3 883.8C1374.3 884.1 1375.3 884.4 1376.3 884.8C1377.3 885.1 1378.3 885.5 1379.3 885.9C1380.3 886.2 1381.3 886.6 1382.3 887.0C1383.3 887.4 1384.3 887.8 1385.3 888.2C1386.3 888.5 1387.3 888.9 1388.3 889.3C1389.3 889.7 1390.8 890.3 1391.3 890.5C1391.8 890.7 1391.5 890.6 1391.5 890.6" stroke="#2626c4" stroke-width="1.15" fill="none"/>
<path d="M530.6 886.8C531.1 887.1 532.6 888.2 533.6 888.8C534.6 889.5 535.6 890.0 536.6 890.6C537.6 891.1 538.6 891.5 539.6 891.9C540.6 892.3 541.6 892.7 542.6 893.0C543.6 893.3 544.6 893.5 545.6 893.7C546.6 893.9 547.6 894.0 548.6 894.1C549.6 894.1 550.6 894.2 551.6 894.1C552.6 894.1 553.6 894.0 554.6 893.8C555.6 893.7 556.6 893.4 557.6 893.2C558.6 892.9 559.6 892.6 560.6 892.2C561.6 891.8 562.6 891.4 563.6 890.9C564.6 890.4 565.6 889.9 566.6 889.3C567.6 888.7 568.6 888.1 569.6 887.5C570.6 886.9 571.6 886.3 572.6 885.7C573.6 885.1 574.6 884.4 575.6 883.8C576.6 883.2 577.6 882.6 578.6 882.1C579.6 881.5 580.6 881.0 581.6 880.5C582.6 880.0 583.6 879.6 584.6 879.2C585.6 878.9 586.6 878.5 587.6 878.3C588.6 878.0 589.6 877.9 590.6 877.7C591.6 877.6 592.6 877.5 593.6 877.5C594.6 877.5 595.6 877.5 596.6 877.6C597.6 877.7 598.6 877.8 599.6 878.0C600.6 878.2 601.6 878.4 602.6 878.6C603.6 878.9 604.6 879.2 605.6 879.5C606.6 879.8 607.6 880.2 608.6 880.6C609.6 880.9 610.6 881.4 611.6 881.8C612.6 882.2 613.6 882.7 614.6 883.2C615.6 883.6 616.6 884.1 617.6 884.6C618.6 885.1 619.6 885.7 620.6 886.2C621.6 886.7 622.6 887.3 623.6 887.8C624.6 888.3 625.6 888.9 626.6 889.4C627.6 889.9 628.6 890.4 629.6 890.8C630.6 891.3 631.6 891.7 632.6 892.1C633.6 892.5 634.6 892.9 635.6 893.1C636.6 893.4 637.6 893.7 638.6 893.8C639.6 894.0 640.6 894.1 641.6 894.1C642.6 894.1 643.6 894.0 644.6 893.8C645.6 893.7 646.6 893.5 647.6 893.2C648.6 892.9 649.6 892.6 650.6 892.2C651.6 891.8 652.6 891.4 653.6 890.9C654.6 890.4 655.6 889.9 656.6 889.4C657.6 888.8 658.6 888.3 659.6 887.7C660.6 887.1 661.6 886.5 662.6 885.9C663.6 885.3 664.6 884.7 665.6 884.0C666.6 883.4 667.6 882.8 668.6 882.2C669.6 881.6 670.6 881.1 671.6 880.5C672.6 880.0 673.6 879.4 674.6 878.9C675.6 878.4 676.6 878.0 677.6 877.6C678.6 877.1 679.6 876.8 680.6 876.4C681.6 876.1 682.6 875.8 683.6 875.6C684.6 875.3 685.6 875.1 686.6 874.9C687.6 874.7 688.6 874.6 689.6 874.5C690.6 874.4 691.6 874.3 692.6 874.3C693.6 874.2 694.6 874.2 695.6 874.2C696.6 874.3 697.6 874.3 698.6 874.4C699.6 874.5 700.6 874.6 701.6 874.8C702.6 875.0 703.6 875.1 704.6 875.3C705.6 875.6 706.6 875.8 707.6 876.1C708.6 876.3 709.6 876.6 710.6 876.9C711.6 877.3 712.6 877.6 713.6 877.9C714.6 878.3 715.6 878.7 716.6 879.0C717.6 879.4 718.6 879.8 719.6 880.1C720.6 880.5 721.6 880.9 722.6 881.2C723.6 881.6 724.6 881.9 725.6 882.3C726.6 882.6 727.6 882.9 728.6 883.2C729.6 883.5 730.6 883.8 731.6 884.0C732.6 884.2 733.6 884.4 734.6 884.6C735.6 884.8 736.6 884.9 737.6 885.0C738.6 885.1 739.6 885.2 740.6 885.3C741.6 885.3 742.6 885.3 743.6 885.3C744.6 885.2 745.6 885.2 746.6 885.1C747.6 885.0 748.6 884.8 749.6 884.6C750.6 884.4 751.6 884.2 752.6 884.0C753.6 883.7 754.6 883.4 755.6 883.1C756.6 882.7 757.6 882.3 758.6 881.9C759.6 881.5 760.6 881.1 761.6 880.6C762.6 880.1 763.6 879.6 764.6 879.1C765.6 878.5 766.6 878.0 767.6 877.4C768.6 876.8 769.6 876.2 770.6 875.7C771.6 875.1 772.6 874.4 773.6 873.8C774.6 873.2 775.6 872.6 776.6 872.0C777.6 871.4 778.6 870.8 779.6 870.2C780.6 869.6 781.6 869.0 782.6 868.4C783.6 867.8 784.6 867.2 785.6 866.6C786.6 866.0 787.6 865.4 788.6 864.8C789.6 864.1 790.6 863.5 791.6 862.9C792.6 862.2 793.6 861.6 794.6 860.9C795.6 860.3 796.6 859.6 797.6 858.9C798.6 858.2 799.6 857.5 800.6 856.7C801.6 856.0 802.6 855.2 803.6 854.5C804.6 853.7 805.6 852.9 806.6 852.1C807.6 851.4 808.6 850.5 809.6 849.7C810.6 848.9 811.6 848.1 812.6 847.3C813.6 846.4 814.6 845.6 815.6 844.7C816.6 843.9 817.6 843.0 818.6 842.1C819.6 841.3 820.6 840.4 821.6 839.5C822.6 838.6 823.6 837.7 824.6 836.9C825.6 836.0 826.6 835.1 827.6 834.2C828.6 833.3 829.6 832.4 830.6 831.5C831.6 830.6 832.6 829.7 833.6 828.8C834.6 827.9 835.6 827.0 836.6 826.1C837.6 825.2 838.6 824.3 839.6 823.4C840.6 822.6 841.6 821.7 842.6 820.8C843.6 819.9 844.6 819.0 845.6 818.2C846.6 817.3 847.6 816.5 848.6 815.6C849.6 814.8 850.6 813.9 851.6 813.1C852.6 812.3 853.6 811.4 854.6 810.6C855.6 809.8 856.6 809.0 857.6 808.2C858.6 807.4 859.6 806.7 860.6 805.9C861.6 805.1 862.6 804.4 863.6 803.6C864.6 802.9 865.6 802.1 866.6 801.4C867.6 800.7 868.6 800.0 869.6 799.3C870.6 798.6 871.6 797.9 872.6 797.2C873.6 796.5 874.6 795.8 875.6 795.1C876.6 794.5 877.6 793.8 878.6 793.2C879.6 792.5 880.6 791.9 881.6 791.2C882.6 790.6 883.6 790.0 884.6 789.3C885.6 788.7 886.6 788.1 887.6 787.5C888.6 786.8 889.6 786.2 890.6 785.5C891.6 784.9 892.6 784.2 893.6 783.6C894.6 782.9 895.6 782.2 896.6 781.5C897.6 780.8 898.6 780.0 899.6 779.3C900.6 778.5 901.6 777.7 902.6 776.9C903.6 776.1 904.6 775.3 905.6 774.4C906.6 773.6 907.6 772.7 908.6 771.8C909.6 770.9 910.6 769.9 911.6 768.9C912.6 768.0 913.6 767.0 914.6 765.9C915.6 764.9 916.6 763.8 917.6 762.7C918.6 761.6 919.6 760.5 920.6 759.3C921.6 758.1 922.6 756.9 923.6 755.7C924.6 754.5 925.6 753.3 926.6 752.0C927.6 750.8 928.6 749.5 929.6 748.3C930.6 747.0 931.6 745.8 932.6 744.5C933.6 743.3 934.6 742.0 935.6 740.8C936.6 739.5 937.6 738.3 938.6 737.1C939.6 735.9 940.6 734.7 941.6 733.6C942.6 732.4 943.6 731.3 944.6 730.2C945.6 729.1 946.6 728.0 947.6 727.0C948.6 725.9 949.6 724.9 950.6 723.9C951.6 722.9 952.6 721.9 953.6 720.9C954.6 719.9 955.6 719.0 956.6 718.0C957.6 717.1 958.6 716.2 959.6 715.3C960.6 714.4 961.6 713.5 962.6 712.7C963.6 711.8 964.6 711.0 965.6 710.1C966.6 709.3 967.6 708.4 968.6 707.6C969.6 706.8 970.6 706.0 971.6 705.2C972.6 704.4 973.6 703.6 974.6 702.8C975.6 702.0 976.6 701.3 977.6 700.5C978.6 699.7 979.6 698.9 980.6 698.1C981.6 697.3 982.6 696.5 983.6 695.8C984.6 695.0 985.6 694.2 986.6 693.4C987.6 692.5 988.6 691.7 989.6 690.9C990.6 690.1 991.6 689.2 992.6 688.4C993.6 687.5 994.6 686.7 995.6 685.8C996.6 684.9 997.6 684.0 998.6 683.0C999.6 682.1 1000.6 681.2 1001.6 680.2C1002.6 679.2 1003.6 678.2 1004.6 677.2C1005.6 676.2 1006.6 675.1 1007.6 674.1C1008.6 673.0 1009.6 671.9 1010.6 670.8C1011.6 669.7 1012.6 668.6 1013.6 667.5C1014.6 666.3 1015.6 665.2 1016.6 664.1C1017.6 662.9 1018.6 661.8 1019.6 660.6C1020.6 659.5 1021.6 658.4 1022.6 657.2C1023.6 656.1 1024.6 655.0 1025.6 653.8C1026.6 652.7 1027.6 651.6 1028.6 650.5C1029.6 649.4 1030.6 648.3 1031.6 647.3C1032.6 646.2 1033.6 645.2 1034.6 644.1C1035.6 643.1 1036.6 642.1 1037.6 641.1C1038.6 640.1 1039.6 639.1 1040.6 638.2C1041.6 637.2 1042.6 636.2 1043.6 635.3C1044.6 634.4 1045.6 633.4 1046.6 632.5C1047.6 631.6 1048.6 630.7 1049.6 629.9C1050.6 629.0 1051.6 628.1 1052.6 627.3C1053.6 626.4 1054.6 625.6 1055.6 624.8C1056.6 623.9 1057.6 623.1 1058.6 622.3C1059.6 621.5 1060.6 620.7 1061.6 620.0C1062.6 619.2 1063.6 618.4 1064.6 617.7C1065.6 616.9 1066.6 616.2 1067.6 615.5C1068.6 614.7 1069.6 614.0 1070.6 613.3C1071.6 612.6 1072.6 611.8 1073.6 611.1C1074.6 610.4 1075.6 609.6 1076.6 608.9C1077.6 608.1 1078.6 607.4 1079.6 606.6C1080.6 605.8 1081.6 605.0 1082.6 604.1C1083.6 603.3 1084.6 602.4 1085.6 601.5C1086.6 600.6 1087.6 599.7 1088.6 598.7C1089.6 597.8 1090.6 596.8 1091.6 595.7C1092.6 594.7 1093.6 593.7 1094.6 592.6C1095.6 591.5 1096.6 590.4 1097.6 589.3C1098.6 588.2 1099.6 587.1 1100.6 585.9C1101.6 584.8 1102.6 583.6 1103.6 582.5C1104.6 581.3 1105.6 580.1 1106.6 578.9C1107.6 577.8 1108.6 576.6 1109.6 575.4C1110.6 574.2 1111.6 573.0 1112.6 571.8C1113.6 570.6 1114.6 569.5 1115.6 568.3C1116.6 567.1 1117.6 566.0 1118.6 564.8C1119.6 563.7 1120.6 562.5 1121.6 561.4C1122.6 560.3 1123.6 559.2 1124.6 558.1C1125.6 557.0 1126.6 555.9 1127.6 554.9C1128.6 553.8 1129.6 552.8 1130.6 551.8C1131.6 550.8 1132.6 549.8 1133.6 548.8C1134.6 547.8 1135.6 546.9 1136.6 545.9C1137.6 545.0 1138.6 544.1 1139.6 543.2C1140.6 542.3 1141.6 541.4 1142.6 540.5C1143.6 539.6 1144.6 538.8 1145.6 537.9C1146.6 537.1 1147.6 536.3 1148.6 535.5C1149.6 534.6 1150.6 533.8 1151.6 533.1C1152.6 532.3 1153.6 531.5 1154.6 530.7C1155.6 530.0 1156.6 529.2 1157.6 528.4C1158.6 527.7 1159.6 526.9 1160.6 526.2C1161.6 525.4 1162.6 524.7 1163.6 524.0C1164.6 523.2 1165.6 522.5 1166.6 521.7C1167.6 520.9 1168.6 520.2 1169.6 519.4C1170.6 518.6 1171.6 517.8 1172.6 517.0C1173.6 516.2 1174.6 515.4 1175.6 514.6C1176.6 513.7 1177.6 512.8 1178.6 511.9C1179.6 511.0 1180.6 510.1 1181.6 509.2C1182.6 508.2 1183.6 507.2 1184.6 506.2C1185.6 505.2 1186.6 504.1 1187.6 503.0C1188.6 502.0 1189.6 500.9 1190.6 499.8C1191.6 498.6 1192.6 497.5 1193.6 496.4C1194.6 495.2 1195.6 494.0 1196.6 492.9C1197.6 491.7 1198.6 490.5 1199.6 489.3C1200.6 488.1 1201.6 486.9 1202.6 485.7C1203.6 484.5 1204.6 483.3 1205.6 482.1C1206.6 481.0 1207.6 479.8 1208.6 478.6C1209.6 477.4 1210.6 476.2 1211.6 475.0C1212.6 473.9 1213.6 472.7 1214.6 471.5C1215.6 470.4 1216.6 469.3 1217.6 468.1C1218.6 467.0 1219.6 465.9 1220.6 464.8C1221.6 463.7 1222.6 462.7 1223.6 461.6C1224.6 460.5 1225.6 459.5 1226.6 458.5C1227.6 457.5 1228.6 456.5 1229.6 455.6C1230.6 454.6 1231.6 453.7 1232.6 452.8C1233.6 451.9 1234.6 451.0 1235.6 450.2C1236.6 449.3 1237.6 448.5 1238.6 447.7C1239.6 446.9 1240.6 446.1 1241.6 445.3C1242.6 444.6 1243.6 443.8 1244.6 443.1C1245.6 442.3 1246.6 441.6 1247.6 440.9C1248.6 440.2 1249.6 439.5 1250.6 438.8C1251.6 438.0 1252.6 437.3 1253.6 436.6C1254.6 435.9 1255.6 435.1 1256.6 434.4C1257.6 433.6 1258.6 432.9 1259.6 432.1C1260.6 431.3 1261.6 430.5 1262.6 429.6C1263.6 428.8 1264.6 427.9 1265.6 427.0C1266.6 426.1 1267.6 425.1 1268.6 424.2C1269.6 423.2 1270.6 422.2 1271.6 421.2C1272.6 420.1 1273.6 419.1 1274.6 418.0C1275.6 416.9 1276.6 415.8 1277.6 414.7C1278.6 413.6 1279.6 412.5 1280.6 411.3C1281.6 410.2 1282.6 409.0 1283.6 407.9C1284.6 406.7 1285.6 405.5 1286.6 404.3C1287.6 403.1 1288.6 401.9 1289.6 400.7C1290.6 399.5 1291.6 398.3 1292.6 397.1C1293.6 395.9 1294.6 394.7 1295.6 393.5C1296.6 392.3 1297.6 391.1 1298.6 389.9C1299.6 388.7 1300.6 387.6 1301.6 386.4C1302.6 385.2 1303.6 384.1 1304.6 383.0C1305.6 381.9 1306.6 380.8 1307.6 379.7C1308.6 378.6 1309.6 377.6 1310.6 376.6C1311.6 375.6 1312.6 374.6 1313.6 373.6C1314.6 372.7 1315.6 371.8 1316.6 370.9C1317.6 370.0 1318.6 369.1 1319.6 368.2C1320.6 367.4 1321.6 366.6 1322.6 365.7C1323.6 364.9 1324.6 364.1 1325.6 363.3C1326.6 362.5 1327.6 361.8 1328.6 361.0C1329.6 360.2 1330.6 359.5 1331.6 358.7C1332.6 357.9 1333.6 357.2 1334.6 356.4C1335.6 355.7 1336.6 354.9 1337.6 354.2C1338.6 353.4 1339.6 352.7 1340.6 351.9C1341.6 351.2 1342.6 350.4 1343.6 349.6C1344.6 348.8 1345.6 348.0 1346.6 347.2C1347.6 346.4 1348.6 345.6 1349.6 344.8C1350.6 343.9 1351.6 343.1 1352.6 342.2C1353.6 341.3 1354.6 340.4 1355.6 339.5C1356.6 338.6 1357.6 337.6 1358.6 336.7C1359.6 335.7 1360.6 334.7 1361.6 333.6C1362.6 332.6 1363.6 331.5 1364.6 330.5C1365.6 329.4 1366.6 328.3 1367.6 327.2C1368.6 326.1 1369.6 324.9 1370.6 323.8C1371.6 322.6 1372.6 321.5 1373.6 320.3C1374.6 319.2 1375.6 318.0 1376.6 316.8C1377.6 315.7 1378.6 314.5 1379.6 313.4C1380.6 312.2 1381.6 311.0 1382.6 309.9C1383.6 308.8 1384.6 307.6 1385.6 306.5C1386.6 305.4 1387.6 304.3 1388.6 303.2C1389.6 302.2 1390.6 301.1 1391.6 300.1C1392.6 299.1 1394.0 297.7 1394.5 297.2" stroke="#c83030" stroke-width="1.15" fill="none"/>
<path d="M530.4 598.5C530.9 598.8 532.4 599.6 533.4 600.4C534.4 601.2 535.4 602.1 536.4 603.2C537.4 604.2 538.4 605.3 539.4 606.5C540.4 607.7 541.4 608.9 542.4 610.1C543.4 611.3 544.4 612.6 545.4 613.7C546.4 614.9 547.4 616.0 548.4 617.1C549.4 618.2 550.4 619.2 551.4 620.2C552.4 621.2 553.4 622.1 554.4 622.9C555.4 623.8 556.4 624.6 557.4 625.4C558.4 626.2 559.4 626.9 560.4 627.6C561.4 628.2 562.4 628.9 563.4 629.5C564.4 630.1 565.4 630.7 566.4 631.3C567.4 631.8 568.4 632.4 569.4 632.9C570.4 633.4 571.4 634.0 572.4 634.5C573.4 635.0 574.4 635.5 575.4 636.0C576.4 636.6 577.4 637.1 578.4 637.6C579.4 638.2 580.4 638.8 581.4 639.3C582.4 639.9 583.4 640.5 584.4 641.2C585.4 641.8 586.4 642.5 587.4 643.2C588.4 643.9 589.4 644.6 590.4 645.4C591.4 646.1 592.4 646.9 593.4 647.7C594.4 648.5 595.4 649.4 596.4 650.2C597.4 651.1 598.4 652.0 599.4 652.9C600.4 653.8 601.4 654.7 602.4 655.6C603.4 656.5 604.4 657.5 605.4 658.5C606.4 659.4 607.4 660.4 608.4 661.4C609.4 662.4 610.4 663.4 611.4 664.4C612.4 665.4 613.4 666.4 614.4 667.5C615.4 668.5 616.4 669.5 617.4 670.6C618.4 671.6 619.4 672.6 620.4 673.7C621.4 674.7 622.4 675.8 623.4 676.8C624.4 677.9 625.4 678.9 626.4 679.9C627.4 681.0 628.4 682.0 629.4 683.0C630.4 684.1 631.4 685.1 632.4 686.1C633.4 687.1 634.4 688.1 635.4 689.1C636.4 690.1 637.4 691.1 638.4 692.0C639.4 693.0 640.4 693.9 641.4 694.8C642.4 695.7 643.4 696.6 644.4 697.5C645.4 698.3 646.4 699.2 647.4 699.9C648.4 700.7 649.4 701.5 650.4 702.2C651.4 702.9 652.4 703.6 653.4 704.2C654.4 704.8 655.4 705.4 656.4 705.9C657.4 706.4 658.4 706.9 659.4 707.3C660.4 707.8 661.4 708.2 662.4 708.6C663.4 709.0 664.4 709.4 665.4 709.8C666.4 710.2 667.4 710.6 668.4 711.0C669.4 711.4 670.4 711.8 671.4 712.2C672.4 712.7 673.4 713.1 674.4 713.6C675.4 714.1 676.4 714.5 677.4 715.0C678.4 715.5 679.4 716.0 680.4 716.6C681.4 717.1 682.4 717.6 683.4 718.2C684.4 718.7 685.4 719.3 686.4 719.9C687.4 720.5 688.4 721.1 689.4 721.7C690.4 722.3 691.4 723.0 692.4 723.6C693.4 724.3 694.4 724.9 695.4 725.6C696.4 726.3 697.4 727.0 698.4 727.7C699.4 728.5 700.4 729.2 701.4 730.0C702.4 730.7 703.4 731.5 704.4 732.3C705.4 733.1 706.4 733.9 707.4 734.7C708.4 735.5 709.4 736.4 710.4 737.2C711.4 738.0 712.4 738.9 713.4 739.7C714.4 740.6 715.4 741.4 716.4 742.3C717.4 743.1 718.4 744.0 719.4 744.8C720.4 745.7 721.4 746.5 722.4 747.3C723.4 748.2 724.4 749.0 725.4 749.8C726.4 750.6 727.4 751.4 728.4 752.1C729.4 752.9 730.4 753.7 731.4 754.4C732.4 755.1 733.4 755.8 734.4 756.5C735.4 757.2 736.4 757.8 737.4 758.4C738.4 759.1 739.4 759.6 740.4 760.2C741.4 760.7 742.4 761.3 743.4 761.7C744.4 762.2 745.4 762.6 746.4 763.0C747.4 763.4 748.4 763.7 749.4 764.0C750.4 764.3 751.4 764.6 752.4 764.8C753.4 765.0 754.4 765.2 755.4 765.3C756.4 765.4 757.4 765.5 758.4 765.6C759.4 765.6 760.4 765.7 761.4 765.6C762.4 765.6 763.4 765.6 764.4 765.5C765.4 765.4 766.4 765.3 767.4 765.2C768.4 765.1 769.4 764.9 770.4 764.7C771.4 764.5 772.4 764.3 773.4 764.0C774.4 763.8 775.4 763.5 776.4 763.3C777.4 763.0 778.4 762.7 779.4 762.3C780.4 762.0 781.4 761.7 782.4 761.3C783.4 760.9 784.4 760.6 785.4 760.2C786.4 759.8 787.4 759.4 788.4 758.9C789.4 758.5 790.4 758.1 791.4 757.6C792.4 757.2 793.4 756.8 794.4 756.3C795.4 755.8 796.4 755.4 797.4 754.9C798.4 754.4 799.4 754.0 800.4 753.5C801.4 753.0 802.4 752.5 803.4 752.0C804.4 751.5 805.4 751.0 806.4 750.5C807.4 750.0 808.4 749.5 809.4 749.0C810.4 748.5 811.4 747.9 812.4 747.4C813.4 746.9 814.4 746.4 815.4 745.8C816.4 745.3 817.4 744.8 818.4 744.2C819.4 743.7 820.4 743.2 821.4 742.6C822.4 742.1 823.4 741.5 824.4 741.0C825.4 740.4 826.4 739.9 827.4 739.3C828.4 738.8 829.4 738.2 830.4 737.7C831.4 737.1 832.4 736.6 833.4 736.0C834.4 735.5 835.4 734.9 836.4 734.4C837.4 733.8 838.4 733.3 839.4 732.7C840.4 732.2 841.4 731.6 842.4 731.1C843.4 730.5 844.4 730.0 845.4 729.4C846.4 728.8 847.4 728.3 848.4 727.7C849.4 727.1 850.4 726.5 851.4 725.9C852.4 725.3 853.4 724.7 854.4 724.0C855.4 723.4 856.4 722.7 857.4 722.1C858.4 721.4 859.4 720.7 860.4 720.0C861.4 719.3 862.4 718.6 863.4 717.8C864.4 717.1 865.4 716.3 866.4 715.5C867.4 714.7 868.4 713.9 869.4 713.1C870.4 712.2 871.4 711.4 872.4 710.4C873.4 709.5 874.4 708.6 875.4 707.6C876.4 706.7 877.4 705.7 878.4 704.6C879.4 703.6 880.4 702.5 881.4 701.5C882.4 700.4 883.4 699.3 884.4 698.2C885.4 697.1 886.4 695.9 887.4 694.8C888.4 693.7 889.4 692.5 890.4 691.4C891.4 690.3 892.4 689.2 893.4 688.0C894.4 686.9 895.4 685.8 896.4 684.7C897.4 683.6 898.4 682.6 899.4 681.5C900.4 680.5 901.4 679.4 902.4 678.5C903.4 677.5 904.4 676.5 905.4 675.6C906.4 674.7 907.4 673.8 908.4 672.9C909.4 672.0 910.4 671.1 911.4 670.3C912.4 669.5 913.4 668.7 914.4 667.8C915.4 667.0 916.4 666.3 917.4 665.5C918.4 664.7 919.4 663.9 920.4 663.2C921.4 662.4 922.4 661.7 923.4 660.9C924.4 660.2 925.4 659.4 926.4 658.7C927.4 658.0 928.4 657.2 929.4 656.5C930.4 655.7 931.4 655.0 932.4 654.2C933.4 653.5 934.4 652.7 935.4 652.0C936.4 651.2 937.4 650.4 938.4 649.6C939.4 648.9 940.4 648.1 941.4 647.3C942.4 646.5 943.4 645.7 944.4 644.8C945.4 644.0 946.4 643.2 947.4 642.3C948.4 641.5 949.4 640.6 950.4 639.7C951.4 638.8 952.4 637.9 953.4 637.0C954.4 636.0 955.4 635.1 956.4 634.1C957.4 633.1 958.4 632.1 959.4 631.1C960.4 630.1 961.4 629.0 962.4 628.0C963.4 626.9 964.4 625.8 965.4 624.7C966.4 623.6 967.4 622.4 968.4 621.3C969.4 620.1 970.4 619.0 971.4 617.8C972.4 616.6 973.4 615.4 974.4 614.2C975.4 613.0 976.4 611.9 977.4 610.7C978.4 609.5 979.4 608.3 980.4 607.1C981.4 605.9 982.4 604.7 983.4 603.6C984.4 602.4 985.4 601.2 986.4 600.1C987.4 599.0 988.4 597.8 989.4 596.7C990.4 595.7 991.4 594.6 992.4 593.5C993.4 592.5 994.4 591.4 995.4 590.4C996.4 589.5 997.4 588.5 998.4 587.6C999.4 586.6 1000.4 585.7 1001.4 584.9C1002.4 584.0 1003.4 583.2 1004.4 582.4C1005.4 581.5 1006.4 580.7 1007.4 580.0C1008.4 579.2 1009.4 578.5 1010.4 577.7C1011.4 577.0 1012.4 576.3 1013.4 575.5C1014.4 574.8 1015.4 574.1 1016.4 573.5C1017.4 572.8 1018.4 572.1 1019.4 571.4C1020.4 570.7 1021.4 570.0 1022.4 569.4C1023.4 568.7 1024.4 568.0 1025.4 567.3C1026.4 566.6 1027.4 565.9 1028.4 565.2C1029.4 564.5 1030.4 563.8 1031.4 563.1C1032.4 562.4 1033.4 561.6 1034.4 560.9C1035.4 560.1 1036.4 559.3 1037.4 558.5C1038.4 557.6 1039.4 556.8 1040.4 555.9C1041.4 555.0 1042.4 554.0 1043.4 553.0C1044.4 552.0 1045.4 551.0 1046.4 549.9C1047.4 548.8 1048.4 547.6 1049.4 546.4C1050.4 545.3 1051.4 544.1 1052.4 542.8C1053.4 541.6 1054.4 540.4 1055.4 539.1C1056.4 537.9 1057.4 536.6 1058.4 535.4C1059.4 534.1 1060.4 532.9 1061.4 531.7C1062.4 530.4 1063.4 529.2 1064.4 528.0C1065.4 526.7 1066.4 525.5 1067.4 524.3C1068.4 523.1 1069.4 521.9 1070.4 520.7C1071.4 519.5 1072.4 518.4 1073.4 517.2C1074.4 516.1 1075.4 514.9 1076.4 513.8C1077.4 512.7 1078.4 511.6 1079.4 510.5C1080.4 509.4 1081.4 508.4 1082.4 507.4C1083.4 506.3 1084.4 505.3 1085.4 504.4C1086.4 503.4 1087.4 502.4 1088.4 501.5C1089.4 500.6 1090.4 499.7 1091.4 498.8C1092.4 498.0 1093.4 497.1 1094.4 496.3C1095.4 495.4 1096.4 494.6 1097.4 493.8C1098.4 493.0 1099.4 492.2 1100.4 491.4C1101.4 490.6 1102.4 489.9 1103.4 489.1C1104.4 488.3 1105.4 487.6 1106.4 486.8C1107.4 486.0 1108.4 485.3 1109.4 484.5C1110.4 483.8 1111.4 483.0 1112.4 482.3C1113.4 481.5 1114.4 480.7 1115.4 480.0C1116.4 479.2 1117.4 478.4 1118.4 477.6C1119.4 476.8 1120.4 476.0 1121.4 475.2C1122.4 474.4 1123.4 473.6 1124.4 472.7C1125.4 471.9 1126.4 471.0 1127.4 470.2C1128.4 469.3 1129.4 468.4 1130.4 467.5C1131.4 466.6 1132.4 465.7 1133.4 464.7C1134.4 463.8 1135.4 462.8 1136.4 461.8C1137.4 460.9 1138.4 459.9 1139.4 458.8C1140.4 457.8 1141.4 456.8 1142.4 455.7C1143.4 454.7 1144.4 453.6 1145.4 452.5C1146.4 451.4 1147.4 450.3 1148.4 449.2C1149.4 448.0 1150.4 446.8 1151.4 445.7C1152.4 444.5 1153.4 443.3 1154.4 442.0C1155.4 440.8 1156.4 439.5 1157.4 438.2C1158.4 437.0 1159.4 435.7 1160.4 434.4C1161.4 433.1 1162.4 431.8 1163.4 430.5C1164.4 429.2 1165.4 428.0 1166.4 426.8C1167.4 425.6 1168.4 424.4 1169.4 423.3C1170.4 422.2 1171.4 421.1 1172.4 420.1C1173.4 419.0 1174.4 418.0 1175.4 417.0C1176.4 416.0 1177.4 415.0 1178.4 414.0C1179.4 413.0 1180.4 412.1 1181.4 411.1C1182.4 410.1 1183.4 409.2 1184.4 408.3C1185.4 407.3 1186.4 406.4 1187.4 405.6C1188.4 404.7 1189.4 403.8 1190.4 402.9C1191.4 402.1 1192.4 401.2 1193.4 400.4C1194.4 399.6 1195.4 398.8 1196.4 398.1C1197.4 397.3 1198.4 396.5 1199.4 395.8C1200.4 395.1 1201.4 394.4 1202.4 393.6C1203.4 392.9 1204.4 392.2 1205.4 391.5C1206.4 390.8 1207.4 390.1 1208.4 389.4C1209.4 388.7 1210.4 388.0 1211.4 387.2C1212.4 386.5 1213.4 385.7 1214.4 385.0C1215.4 384.2 1216.4 383.4 1217.4 382.6C1218.4 381.8 1219.4 380.9 1220.4 380.0C1221.4 379.2 1222.4 378.3 1223.4 377.4C1224.4 376.4 1225.4 375.5 1226.4 374.5C1227.4 373.5 1228.4 372.6 1229.4 371.5C1230.4 370.5 1231.4 369.5 1232.4 368.4C1233.4 367.3 1234.4 366.2 1235.4 365.1C1236.4 364.0 1237.4 362.8 1238.4 361.6C1239.4 360.5 1240.4 359.3 1241.4 358.1C1242.4 356.9 1243.4 355.6 1244.4 354.4C1245.4 353.2 1246.4 352.0 1247.4 350.8C1248.4 349.6 1249.4 348.4 1250.4 347.2C1251.4 346.1 1252.4 344.9 1253.4 343.8C1254.4 342.7 1255.4 341.5 1256.4 340.4C1257.4 339.4 1258.4 338.3 1259.4 337.2C1260.4 336.2 1261.4 335.1 1262.4 334.1C1263.4 333.1 1264.4 332.1 1265.4 331.1C1266.4 330.1 1267.4 329.2 1268.4 328.2C1269.4 327.3 1270.4 326.4 1271.4 325.5C1272.4 324.6 1273.4 323.7 1274.4 322.8C1275.4 322.0 1276.4 321.1 1277.4 320.3C1278.4 319.5 1279.4 318.6 1280.4 317.8C1281.4 317.1 1282.4 316.3 1283.4 315.5C1284.4 314.7 1285.4 314.0 1286.4 313.2C1287.4 312.5 1288.4 311.8 1289.4 311.0C1290.4 310.3 1291.4 309.5 1292.4 308.8C1293.4 308.0 1294.4 307.2 1295.4 306.5C1296.4 305.7 1297.4 304.9 1298.4 304.1C1299.4 303.3 1300.4 302.4 1301.4 301.6C1302.4 300.8 1303.4 299.9 1304.4 299.0C1305.4 298.1 1306.4 297.2 1307.4 296.3C1308.4 295.4 1309.4 294.5 1310.4 293.5C1311.4 292.6 1312.4 291.6 1313.4 290.6C1314.4 289.6 1315.4 288.7 1316.4 287.7C1317.4 286.7 1318.4 285.6 1319.4 284.6C1320.4 283.6 1321.4 282.6 1322.4 281.5C1323.4 280.5 1324.4 279.4 1325.4 278.4C1326.4 277.3 1327.4 276.2 1328.4 275.2C1329.4 274.1 1330.4 273.0 1331.4 271.9C1332.4 270.9 1333.4 269.8 1334.4 268.7C1335.4 267.6 1336.4 266.5 1337.4 265.4C1338.4 264.3 1339.4 263.2 1340.4 262.1C1341.4 261.0 1342.4 259.9 1343.4 258.8C1344.4 257.7 1345.4 256.6 1346.4 255.5C1347.4 254.4 1348.4 253.3 1349.4 252.3C1350.4 251.2 1351.4 250.1 1352.4 249.0C1353.4 247.9 1354.4 246.9 1355.4 245.8C1356.4 244.7 1357.4 243.7 1358.4 242.6C1359.4 241.6 1360.4 240.5 1361.4 239.5C1362.4 238.5 1363.4 237.5 1364.4 236.4C1365.4 235.4 1366.4 234.4 1367.4 233.4C1368.4 232.5 1369.4 231.5 1370.4 230.5C1371.4 229.6 1372.4 228.6 1373.4 227.7C1374.4 226.8 1375.4 225.8 1376.4 224.9C1377.4 224.1 1378.4 223.2 1379.4 222.3C1380.4 221.4 1381.4 220.6 1382.4 219.8C1383.4 219.0 1384.4 218.1 1385.4 217.4C1386.4 216.6 1387.4 215.8 1388.4 215.1C1389.4 214.3 1390.5 213.6 1391.4 212.9C1392.3 212.3 1393.6 211.5 1394.0 211.2" stroke="#44d844" stroke-width="1.15" fill="none"/>
<rect x="530.5" y="105.5" width="867" height="874" fill="none" stroke="#262626" stroke-width="1"/>
</svg>
<div class="t" style="left:509.9px;top:969.7px;font-size:20px;color:#262626">0</div>
<div class="t" style="left:510.1px;top:844.7px;font-size:20px;color:#262626">1</div>
<div class="t" style="left:510.2px;top:720.7px;font-size:20px;color:#262626">2</div>
<div class="t" style="left:510.0px;top:595.7px;font-size:20px;color:#262626">3</div>
<div class="t" style="left:509.7px;top:470.7px;font-size:20px;color:#262626">4</div>
<div class="t" style="left:510.0px;top:345.7px;font-size:20px;color:#262626">5</div>
<div class="t" style="left:510.0px;top:220.7px;font-size:20px;color:#262626">6</div>
<div class="t" style="left:510.2px;top:95.7px;font-size:20px;color:#262626">7</div>
<div class="t" style="left:525.0px;top:990.7px;font-size:20px;color:#262626">0</div>
<div class="t" style="left:805.7px;top:990.7px;font-size:20px;color:#262626">0.5</div>
<div class="t" style="left:1102.8px;top:990.7px;font-size:20px;color:#262626">1</div>
<div class="t" style="left:1383.3px;top:990.7px;font-size:20px;color:#262626">1.5</div>
<div class="t" style="left:480.1px;top:700.5px;font-size:22px;color:#262626;transform-origin:0 0;transform:rotate(-90deg)">internuclear distance (Angstrom)</div>
<div class="a" style="left:1103px;top:125px;width:275px;height:77px;background:#fff;border:1px solid #262626"></div>
<svg class="a" style="left:1108px;top:135px" width="62" height="56"><path d="M0 4.5h61" stroke="#12128c" stroke-width="1.4"/><path d="M0 28.5h61" stroke="#b02828" stroke-width="1.4"/><path d="M0 51.5h61" stroke="#30c030" stroke-width="1.4"/></svg>
<div class="t" style="left:1173.3px;top:131.6px;font-size:18px">A-B bond distance (Ang)</div>
<div class="t" style="left:1173.3px;top:155.6px;font-size:18px">B-C bond distance (Ang)</div>
<div class="t" style="left:1173.3px;top:179.6px;font-size:18px">A-C bond distance (Ang)</div>
<div class="a" style="left:1296px;top:222px;width:89px;height:66px;background:#fcfcee;border:2px solid #6a6a66"></div>
<div class="t" style="left:1303.1px;top:233.3px;font-size:20px;">X: 1.495</div>
<div class="t" style="left:1303.1px;top:259.3px;font-size:20px;">Y: 5.462</div>
<div class="a" style="left:1386px;top:289px;width:17px;height:17px;background:#fbfbe6"></div>
<div class="a" style="left:1387.5px;top:290.5px;width:14px;height:14px;background:#000"></div>
<div class="a" style="left:1283px;top:816px;width:99px;height:65px;background:#fbfbee;border:1px solid #d0d0c8"></div>
<div class="t" style="left:1288.8px;top:826.3px;font-size:20px;">X: 1.49</div>
<div class="t" style="left:1288.8px;top:852.3px;font-size:20px;">Y: 0.7114</div>
<div class="a" style="left:1383px;top:882px;width:17px;height:17px;background:#fbfbe6"></div>
<div class="a" style="left:1384.5px;top:883.5px;width:14px;height:14px;background:#000"></div>
</body></html>
